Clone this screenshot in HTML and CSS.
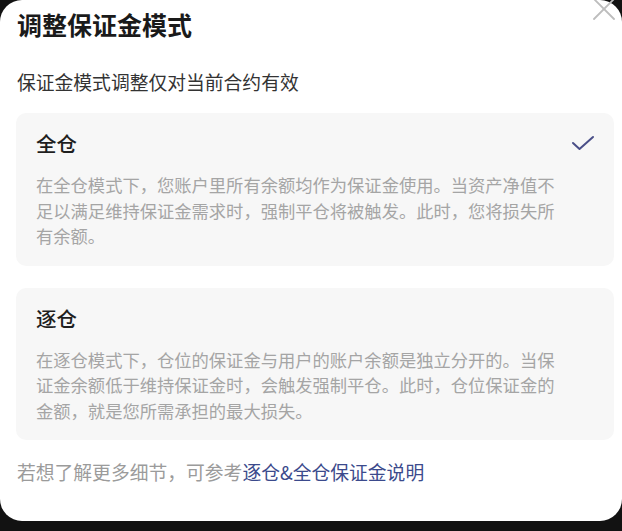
FILE: index.html
```html
<!DOCTYPE html>
<html lang="zh-CN">
<head>
<meta charset="utf-8">
<title>调整保证金模式</title>
<link rel="stylesheet" href="styles.css">
</head>
<body>
<div class="card">
  <button class="close" aria-label="关闭">
    <svg width="26" height="26" viewBox="0 0 26 26"><path d="M3 3 L23 23 M23 3 L3 23" stroke="#bdbdbd" stroke-width="1.8" fill="none" stroke-linecap="round"/></svg>
  </button>
  <h1 class="title">调整保证金模式</h1>
  <p class="subtitle">保证金模式调整仅对当前合约有效</p>
  <div class="option selected">
    <div class="option-head">
      <span class="option-name">全仓</span>
      <svg class="check" width="24" height="16" viewBox="0 0 24 16"><path d="M2 8 L8.5 14 L22 2" stroke="#4a4f88" stroke-width="2" fill="none" stroke-linecap="round" stroke-linejoin="round"/></svg>
    </div>
    <p class="option-desc">在全仓模式下，您账户里所有余额均作为保证金使用。当资产净值不足以满足维持保证金需求时，强制平仓将被触发。此时，您将损失所有余额。</p>
  </div>
  <div class="option">
    <div class="option-head">
      <span class="option-name">逐仓</span>
    </div>
    <p class="option-desc">在逐仓模式下，仓位的保证金与用户的账户余额是独立分开的。当保证金余额低于维持保证金时，会触发强制平仓。此时，仓位保证金的金额，就是您所需承担的最大损失。</p>
  </div>
  <p class="footer">若想了解更多细节，可参考<a class="link" href="#">逐仓&amp;全仓保证金说明</a></p>
</div>
</body>
</html>
```

FILE: styles.css
```css
* { box-sizing: border-box; }
html, body {
  margin: 0;
  padding: 0;
  width: 622px;
  height: 531px;
  background: #121212;
  overflow: hidden;
  font-family: "Noto Sans CJK SC", "Noto Sans", sans-serif;
}
.card {
  position: relative;
  width: 622px;
  height: 521px;
  background: #ffffff;
  border-radius: 22px;
  padding: 7px 8px 0 16px;
}
.close {
  position: absolute;
  top: -4px;
  right: 5px;
  width: 26px;
  height: 26px;
  padding: 0;
  border: 0;
  background: transparent;
}
.close svg { display: block; }
.title {
  margin: 0;
  padding-left: 1px;
  font-size: 25px;
  line-height: 34px;
  font-weight: 700;
  color: #1a1a1a;
}
.subtitle {
  margin: 28px 0 0;
  padding-left: 1px;
  font-size: 18.8px;
  line-height: 26px;
  color: #333333;
}
.option {
  margin-top: 18px;
  background: #f7f7f7;
  border-radius: 10px;
  padding: 16px 20px 17px 20px;
}
.option + .option { margin-top: 22px; }
.option-head {
  display: flex;
  align-items: center;
  justify-content: space-between;
  height: 28px;
}
.option-name {
  font-size: 20.5px;
  line-height: 28px;
  font-weight: 500;
  color: #1f1f1f;
}
.check { display: block; margin-right: -1px; }
.option-desc {
  margin: 15px 0 0;
  max-width: 528px;
  font-size: 17.3px;
  line-height: 25.5px;
  color: #a5a5a5;
}
.footer {
  margin: 19px 0 0;
  padding-left: 1px;
  font-size: 18.8px;
  line-height: 26px;
  color: #9b9b9b;
}
.link {
  color: #3b4a8c;
  text-decoration: none;
}
```
